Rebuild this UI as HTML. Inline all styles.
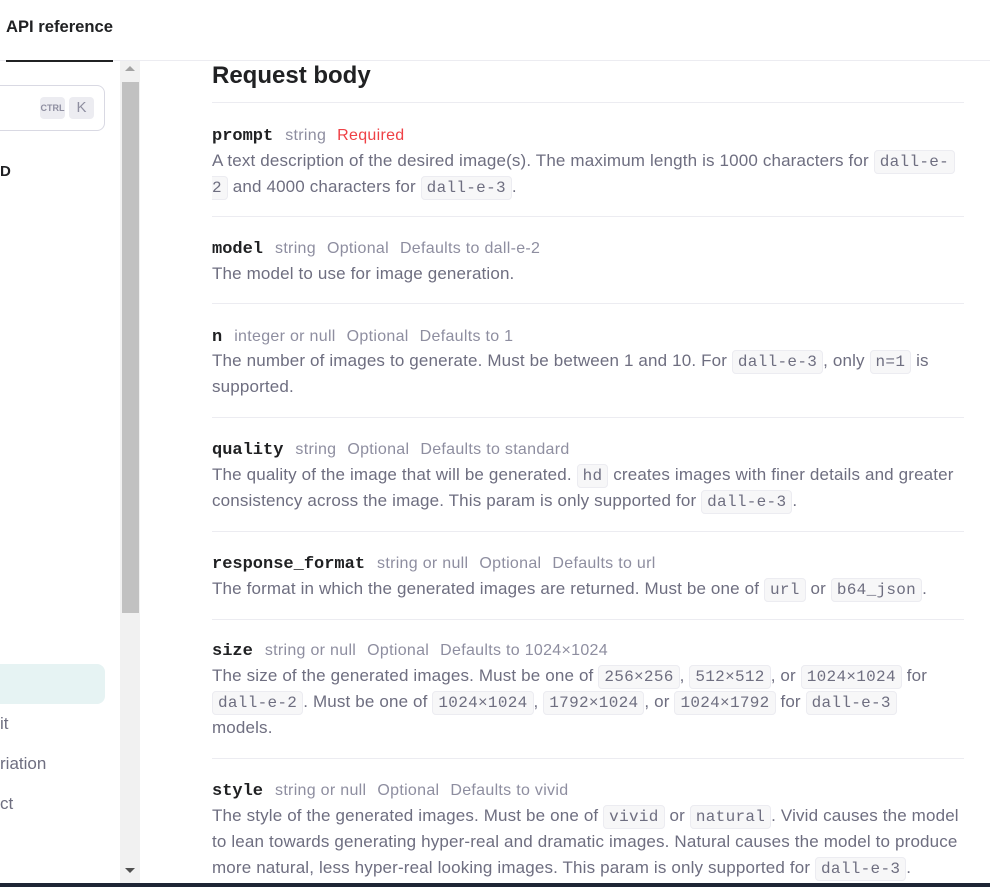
<!DOCTYPE html>
<html><head><meta charset="utf-8"><style>
*{margin:0;padding:0;box-sizing:border-box}
body{width:990px;height:887px;overflow:hidden;background:#fff;font-family:"Liberation Sans",sans-serif;position:relative;color:#353740}
.a{position:absolute;white-space:nowrap}
.hdr{left:6px;top:17px;font-size:16.6px;font-weight:bold;color:#202123}
.ul{left:6px;top:60px;width:107px;height:2px;background:#202123}
.hline{left:0;top:60px;width:990px;height:1px;background:#ececf1}
.search{left:-20px;top:85px;width:125px;height:46px;border:1px solid #d9d9e3;border-radius:8px}
.kb{top:97px;height:22px;background:#ececf1;border-radius:4px;color:#8e8ea0;font-size:11px;line-height:22px;text-align:center}
.track{left:120px;top:61px;width:20px;height:826px;background:#f1f1f1}
.thumb{left:122px;top:82px;width:17px;height:531px;background:#c1c1c1}
.sel{left:-10px;top:664px;width:115px;height:40px;background:#e6f3f3;border-radius:8px}
.nav{font-size:17px;color:#6e6e80;left:0}
h1{position:absolute;left:212px;top:62px;font-size:24px;font-weight:bold;color:#202123}
.hr{position:absolute;left:212px;width:752px;height:1px;background:#ececf1}
.t{position:absolute;left:212px;font-size:17px;letter-spacing:0.15px;line-height:26px;white-space:nowrap;color:#6e6e80}
.n{font-family:"Liberation Mono",monospace;font-weight:bold;color:#202123;font-size:17px;letter-spacing:0;margin-right:12px}
.m{font-size:16px;color:#8e8ea0;margin-right:11px;letter-spacing:0.3px}
.r{color:#ef4146;font-size:16px;letter-spacing:0.3px}
code{font-family:"Liberation Mono",monospace;font-size:16px;letter-spacing:0.3px;background:#f7f7f8;border:1px solid #ececf1;border-radius:4px;padding:2px 5px;color:#6e6e80}
.bot{left:0;top:883px;width:990px;height:4px;background:#1e2535}
</style></head><body>
<div class="a hdr">API reference</div>
<div class="a hline"></div>
<div class="a ul"></div>
<div class="a search"></div>
<div class="a kb" style="left:40px;width:25px;font-size:9px;font-weight:bold">CTRL</div>
<div class="a kb" style="left:69px;width:25px;font-size:15px">K</div>
<div class="a" style="left:0;top:163px;font-size:15px;font-weight:bold;color:#202123">D</div>
<div class="a sel"></div>
<div class="a nav" style="top:714px">it</div>
<div class="a nav" style="top:754px">riation</div>
<div class="a nav" style="top:794px">ct</div>
<div class="a track"></div>
<div class="a thumb"></div>
<div class="a" style="left:125px;top:66px;width:0;height:0;border:5px solid transparent;border-bottom:5px solid #a3a3a3;border-top:none"></div>
<div class="a" style="left:125px;top:868px;width:0;height:0;border:5px solid transparent;border-top:5px solid #505050;border-bottom:none"></div>

<h1>Request body</h1>
<div class="hr" style="top:102px"></div>
<div class="t" style="top:122px"><span class="n">prompt</span><span class="m">string</span><span class="r">Required</span></div>
<div class="t" style="top:148px">A text description of the desired image(s). The maximum length is 1000 characters for <code>dall-e-</code></div>
<div class="t" style="top:174px"><code style="border-left:none;border-radius:0 4px 4px 0;padding-left:0">2</code> and 4000 characters for <code>dall-e-3</code>.</div>
<div class="hr" style="top:216px"></div>
<div class="t" style="top:235px"><span class="n">model</span><span class="m">string</span><span class="m">Optional</span><span class="m">Defaults to dall-e-2</span></div>
<div class="t" style="top:261px">The model to use for image generation.</div>
<div class="hr" style="top:303px"></div>
<div class="t" style="top:323px"><span class="n">n</span><span class="m">integer or null</span><span class="m">Optional</span><span class="m">Defaults to 1</span></div>
<div class="t" style="top:348px">The number of images to generate. Must be between 1 and 10. For <code>dall-e-3</code>, only <code>n=1</code> is</div>
<div class="t" style="top:374px">supported.</div>
<div class="hr" style="top:417px"></div>
<div class="t" style="top:436px"><span class="n">quality</span><span class="m">string</span><span class="m">Optional</span><span class="m">Defaults to standard</span></div>
<div class="t" style="top:462px">The quality of the image that will be generated. <code>hd</code> creates images with finer details and greater</div>
<div class="t" style="top:488px">consistency across the image. This param is only supported for <code>dall-e-3</code>.</div>
<div class="hr" style="top:531px"></div>
<div class="t" style="top:550px"><span class="n">response_format</span><span class="m">string or null</span><span class="m">Optional</span><span class="m">Defaults to url</span></div>
<div class="t" style="top:576px">The format in which the generated images are returned. Must be one of <code>url</code> or <code>b64_json</code>.</div>
<div class="hr" style="top:619px"></div>
<div class="t" style="top:637px"><span class="n">size</span><span class="m">string or null</span><span class="m">Optional</span><span class="m">Defaults to 1024×1024</span></div>
<div class="t" style="top:663px">The size of the generated images. Must be one of <code>256×256</code>, <code>512×512</code>, or <code>1024×1024</code> for</div>
<div class="t" style="top:689px"><code>dall-e-2</code>. Must be one of <code>1024×1024</code>, <code>1792×1024</code>, or <code>1024×1792</code> for <code>dall-e-3</code></div>
<div class="t" style="top:715px">models.</div>
<div class="hr" style="top:758px"></div>
<div class="t" style="top:777px"><span class="n">style</span><span class="m">string or null</span><span class="m">Optional</span><span class="m">Defaults to vivid</span></div>
<div class="t" style="top:803px">The style of the generated images. Must be one of <code>vivid</code> or <code>natural</code>. Vivid causes the model</div>
<div class="t" style="top:829px">to lean towards generating hyper-real and dramatic images. Natural causes the model to produce</div>
<div class="t" style="top:855px">more natural, less hyper-real looking images. This param is only supported for <code>dall-e-3</code>.</div>
<div class="a bot"></div>
</body></html>
